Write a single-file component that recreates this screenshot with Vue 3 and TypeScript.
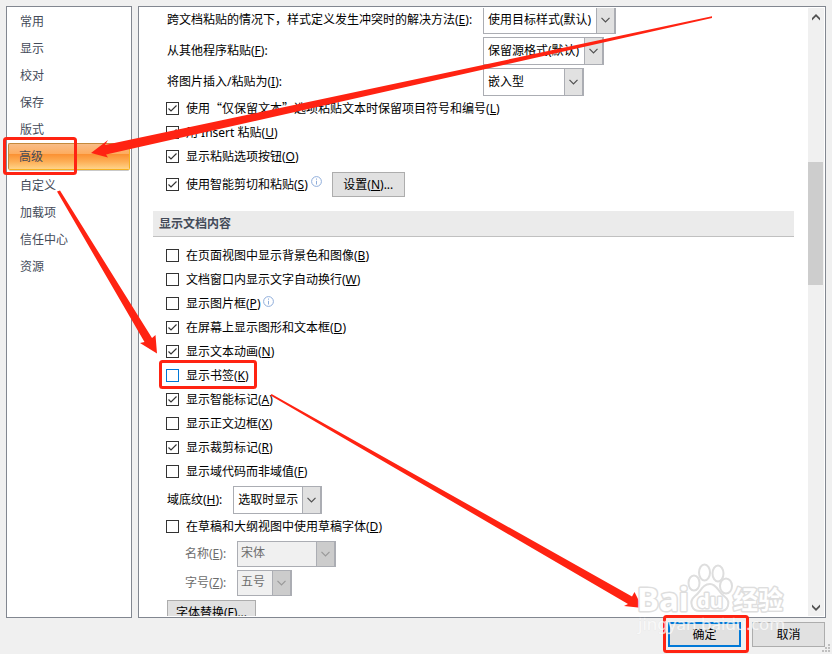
<script setup lang="ts">
import { ref } from 'vue'

interface Check {
  id: string
  text: string
  key: string
  on: boolean
  info?: boolean
  focus?: boolean
}

const tabs = ['常用', '显示', '校对', '保存', '版式', '高级', '自定义', '加载项', '信任中心', '资源']
const active = ref('高级')

const pasteSelects = [
  { id: 'conflict', text: '跨文档粘贴的情况下，样式定义发生冲突时的解决方法', key: 'E', value: '使用目标样式(默认)', size: 'w-long' },
  { id: 'other', text: '从其他程序粘贴', key: 'F', value: '保留源格式(默认)', size: 'w-mid' },
  { id: 'picture', text: '将图片插入/粘贴为', key: 'I', value: '嵌入型', size: 'w-short' },
]

const pasteChecks = ref<Check[]>([
  { id: 'insert', text: '用 Insert 粘贴', key: 'U', on: true },
  { id: 'pasteButton', text: '显示粘贴选项按钮', key: 'O', on: true },
])
const keepText = ref(true)
const smartPaste = ref(true)
const draftFont = ref(false)

const viewChecks = ref<Check[]>([
  { id: 'background', text: '在页面视图中显示背景色和图像', key: 'B', on: false },
  { id: 'wrap', text: '文档窗口内显示文字自动换行', key: 'W', on: false },
  { id: 'frames', text: '显示图片框', key: 'P', on: false, info: true },
  { id: 'shapes', text: '在屏幕上显示图形和文本框', key: 'D', on: true },
  { id: 'animation', text: '显示文本动画', key: 'N', on: true },
  { id: 'bookmarks', text: '显示书签', key: 'K', on: false, focus: true },
  { id: 'smartTags', text: '显示智能标记', key: 'A', on: true },
  { id: 'borders', text: '显示正文边框', key: 'X', on: false },
  { id: 'crop', text: '显示裁剪标记', key: 'R', on: true },
  { id: 'codes', text: '显示域代码而非域值', key: 'F', on: false },
])
</script>

<template>
  <main class="dialog">
    <div class="panes">
      <nav class="sidebar">
        <button
          v-for="tab in tabs"
          :key="tab"
          type="button"
          class="tab"
          :class="{ active: tab === active }"
          @click="active = tab"
        >{{ tab }}</button>
      </nav>

      <section class="panel">
        <div class="scroll">
          <div class="selects">
            <div v-for="s in pasteSelects" :key="s.id" class="select-row">
              <label class="caption" :for="s.id">{{ s.text }}(<u>{{ s.key }}</u>):</label>
              <span class="combo" :class="s.size">
                <select :id="s.id"><option>{{ s.value }}</option></select>
                <span class="drop"><svg viewBox="0 0 9 6"><path d="M.5 .8L4.5 4.8L8.5 .8" /></svg></span>
              </span>
            </div>
          </div>

          <label class="check">
            <input v-model="keepText" type="checkbox">
            <span class="text">使用<span class="cjk">“</span>仅保留文本<span class="cjk">”</span>选项粘贴文本时保留项目符号和编号(<u>L</u>)</span>
          </label>
          <label v-for="c in pasteChecks" :key="c.id" class="check">
            <input v-model="c.on" type="checkbox">
            <span class="text">{{ c.text }}(<u>{{ c.key }}</u>)</span>
          </label>
          <div class="smart-row">
            <label class="check">
              <input v-model="smartPaste" type="checkbox">
              <span>使用智能剪切和粘贴(<u>S</u>)</span>
            </label>
            <svg class="info" viewBox="0 0 11 11"><circle cx="5.5" cy="5.5" r="4.9" /><path d="M5.5 2.5V3.7M5.5 4.8V8.5" /></svg>
            <button type="button" class="btn">设置(<u>N</u>)...</button>
          </div>

          <h2 class="heading">显示文档内容</h2>

          <div class="checks">
            <label v-for="c in viewChecks" :key="c.id" class="check" :class="{ focus: c.focus }">
              <input v-model="c.on" type="checkbox">
              <span class="text">{{ c.text }}(<u>{{ c.key }}</u>)</span>
              <svg v-if="c.info" class="info" viewBox="0 0 11 11"><circle cx="5.5" cy="5.5" r="4.9" /><path d="M5.5 2.5V3.7M5.5 4.8V8.5" /></svg>
            </label>
          </div>

          <div class="shade-row">
            <label for="shade">域底纹(<u>H</u>):</label>
            <span class="combo w-shade">
              <select id="shade"><option>选取时显示</option></select>
              <span class="drop"><svg viewBox="0 0 9 6"><path d="M.5 .8L4.5 4.8L8.5 .8" /></svg></span>
            </span>
          </div>

          <label class="check">
            <input v-model="draftFont" type="checkbox">
            <span class="text">在草稿和大纲视图中使用草稿字体(<u>D</u>)</span>
          </label>

          <div class="font-rows">
            <label for="fontName">名称(<u>E</u>):</label>
            <span class="combo off w-name">
              <select id="fontName" disabled><option>宋体</option></select>
              <span class="drop"><svg viewBox="0 0 9 6"><path d="M.5 .8L4.5 4.8L8.5 .8" /></svg></span>
            </span>
            <label for="fontSize">字号(<u>Z</u>):</label>
            <span class="combo off w-size">
              <select id="fontSize" disabled><option>五号</option></select>
              <span class="drop"><svg viewBox="0 0 9 6"><path d="M.5 .8L4.5 4.8L8.5 .8" /></svg></span>
            </span>
          </div>
          <button type="button" class="btn replace">字体替换(<u>F</u>)...</button>
        </div>

        <div class="bar">
          <svg class="arrow" viewBox="0 0 8 7"><path d="M0 6.5V4L4 0L8 4V6.5L4 2.5Z" /></svg>
          <div class="track"><div class="thumb"></div></div>
          <svg class="arrow" viewBox="0 0 8 7"><path d="M0 .5V3L4 7L8 3V.5L4 4.5Z" /></svg>
        </div>
      </section>
    </div>

    <footer class="footer">
      <button type="button" class="btn ok">确定</button>
      <button type="button" class="btn">取消</button>
    </footer>

    <svg class="overlay" width="832" height="654" viewBox="0 0 832 654">
      <g fill="#bfbfbf">
        <path d="M828 644h2v2h-2zM825 647h2v2h-2zM828 647h2v2h-2zM822 650h2v2h-2zM825 650h2v2h-2zM828 650h2v2h-2z" />
      </g>
      <g fill="#ff2312">
        <path d="M712 16.300L105 145L108 140L91 153L108 157.500L106 154.500L712 18Z" />
        <path d="M57 191.500L60 190.500L152 338L155.500 335L157 353.500L140 343L144.500 342Z" />
        <path d="M270.500 395.500L271.500 394L632 596.500L634.500 592L642.500 608L624 606L628 604Z" />
      </g>
      <g fill="none" stroke="#ff2312" stroke-width="3">
        <rect x="4.500" y="138.500" width="71" height="35" rx="2" />
        <rect x="160.500" y="361.500" width="95" height="26" rx="2" />
        <rect x="664.500" y="616.500" width="83" height="35" rx="2" />
      </g>
      <g class="mark">
        <text x="637" y="611" class="mark-big">Bai</text>
        <ellipse cx="694" cy="583" rx="5.500" ry="7.500" />
        <ellipse cx="704.500" cy="572.500" rx="5.500" ry="8" />
        <ellipse cx="718" cy="573.500" rx="5.500" ry="8" />
        <ellipse cx="726" cy="586" rx="6" ry="7.500" />
        <path d="M710 584C702 584 701 592 695 596C688 602 692 612 701 611H719C728 612 732 602 724 596C718 592 717 584 710 584Z" />
        <text x="697" y="608" class="mark-du">du</text>
        <text x="733" y="609" class="mark-cn">经验</text>
        <text x="638" y="630" class="mark-url">jingyan.baidu.com</text>
      </g>
    </svg>
  </main>
</template>

<style>
body {
  background: #f0f0f0;
}
</style>

<style scoped>
.dialog {
  position: relative;
  box-sizing: border-box;
  min-height: 100vh;
  padding: 6px;
  overflow: hidden;
  background: #f0f0f0;
  color: #000;
  font: 12px/16px "Noto Sans", "Noto Sans CJK SC", sans-serif;
}
button,
select {
  font: inherit;
  color: inherit;
}
.panes {
  display: flex;
  gap: 6px;
  height: calc(100vh - 42px);
}
.sidebar,
.panel {
  box-sizing: border-box;
  border: 1px solid #828790;
  background: #fff;
}
.sidebar {
  flex: 0 0 126px;
  display: flex;
  flex-direction: column;
  padding: 1px;
}
.tab {
  flex: 0 0 27px;
  border: 0;
  padding: 0 12px;
  background: none;
  color: #444b59;
  text-align: left;
}
.tab.active {
  border: 1px solid #c58a3c;
  border-bottom-color: #f5b020;
  border-right-color: #f5b020;
  border-radius: 2px;
  padding: 1px 10px 0;
  margin-bottom: 2px;
  background: linear-gradient(#f8bd88, #fdac5e 40%, #fb9234 42%, #fdae55 70%, #ffd388);
  box-shadow: 0 2px 0 -1px #c9c9c9;
}
.panel {
  flex: 1;
  display: flex;
  padding: 1px;
}
.scroll {
  flex: 1;
  overflow: hidden;
  padding: 0 14px 0 26px;
}
.selects {
  display: flex;
  flex-direction: column;
  gap: 3px;
  margin-top: -2px;
}
.select-row {
  display: grid;
  grid-template-columns: 317px auto;
  justify-content: start;
  align-items: center;
}
.caption {
  padding-left: 1px;
}
.combo {
  display: grid;
  height: 28px;
}
.combo > * {
  grid-area: 1 / 1;
}
.combo select {
  appearance: none;
  box-sizing: border-box;
  width: 100%;
  border: 1px solid #abadb3;
  border-radius: 0;
  padding: 0 0 0 4px;
  background: #fff;
}
.drop {
  justify-self: end;
  box-sizing: border-box;
  width: 20px;
  display: flex;
  align-items: center;
  justify-content: center;
  border: solid #abadb3;
  border-width: 1px 2px 1px 1px;
  background: #e1e1e1;
  pointer-events: none;
}
.drop svg {
  width: 9px;
  height: 6px;
  fill: none;
  stroke: #505050;
  stroke-width: 1.2;
}
.combo.off {
  height: 26px;
}
.combo.off select {
  padding: 0 0 2px 3px;
  background: #f0f0f0;
  color: #6d6d6d;
  opacity: 1;
}
.off .drop {
  background: #ccc;
}
.off .drop svg {
  stroke: #999;
}
.w-long {
  width: 133px;
}
.w-mid {
  width: 121px;
}
.w-short {
  width: 101px;
}
.w-shade {
  width: 89px;
}
.w-name {
  width: 99px;
}
.w-size {
  width: 55px;
}
.check {
  display: flex;
  align-items: center;
  gap: 7px;
  height: 24px;
}
.text {
  padding-top: 2px;
}
.check input {
  appearance: none;
  box-sizing: border-box;
  flex: none;
  width: 13px;
  height: 13px;
  margin: 0;
  border: 1px solid #333;
  background: #fff;
}
.check input:checked {
  background: #fff url("data:image/svg+xml,%3Csvg xmlns='http://www.w3.org/2000/svg' viewBox='0 0 11 11'%3E%3Cpath d='M1.500 5.500L4 8L9.500 2.500' fill='none' stroke='%23333' stroke-width='1.200'/%3E%3C/svg%3E");
}
.check.focus input {
  border-color: #0078d7;
}
.cjk {
  font-family: "Noto Sans CJK SC", sans-serif;
  line-height: 1;
}
.info {
  flex: none;
  align-self: flex-start;
  width: 11px;
  height: 11px;
  margin: 5px 0 0 -4px;
  fill: #fff;
  stroke: #8fadda;
}
.smart-row {
  display: flex;
  align-items: center;
  height: 33px;
}
.smart-row .info {
  margin: 8px 10px 0 3px;
}
.btn {
  box-sizing: border-box;
  width: 73px;
  height: 25px;
  border: 1px solid #adadad;
  padding: 0;
  background: #e1e1e1;
}
.heading {
  box-sizing: border-box;
  height: 26px;
  margin: 10px 0 6px -13px;
  border-bottom: 1px solid #c0c0c0;
  padding-left: 6px;
  background: #ebebeb;
  color: #444b59;
  font-size: 12px;
  line-height: 25px;
}
.shade-row {
  display: flex;
  align-items: center;
  gap: 11px;
  padding: 3px 0 0 1px;
}
.font-rows {
  display: grid;
  grid-template-columns: 52px auto;
  justify-content: start;
  align-items: center;
  gap: 3px 0;
  padding: 3px 0 4px 19px;
  color: #6d6d6d;
}
.replace {
  display: block;
  width: 89px;
  margin-left: 1px;
}
.bar {
  flex: 0 0 16px;
  display: flex;
  flex-direction: column;
  align-items: center;
  justify-content: space-between;
  box-sizing: border-box;
  padding: 6px 0 5px;
  background: #f0f0f0;
}
.arrow {
  width: 8px;
  height: 7px;
  fill: #505050;
}
.track {
  flex: 1;
  align-self: stretch;
  display: grid;
  grid-template-rows: 141fr 123fr 319fr;
}
.thumb {
  grid-row: 2;
  margin-right: 1px;
  background: #cdcdcd;
}
.footer {
  display: flex;
  justify-content: flex-end;
  gap: 11px;
  padding: 4px 1px 0 0;
}
.btn.ok {
  border: 2px solid #0078d7;
}
.overlay {
  position: absolute;
  top: 0;
  left: 0;
  pointer-events: none;
}
.mark {
  fill: #fff;
  stroke: #dedede;
  stroke-width: 2;
}
.mark text {
  paint-order: stroke;
  stroke-width: 3;
  stroke-linejoin: round;
}
.mark .mark-big {
  font: bold 33px "Noto Sans", sans-serif;
}
.mark .mark-du {
  font: bold 20px "Noto Sans", sans-serif;
}
.mark .mark-cn {
  font: bold 25px "Noto Sans CJK SC", sans-serif;
}
.mark .mark-url {
  font: 17px "Noto Sans", sans-serif;
  fill-opacity: 0.7;
  stroke-opacity: 0.3;
  stroke-width: 1;
}
</style>
